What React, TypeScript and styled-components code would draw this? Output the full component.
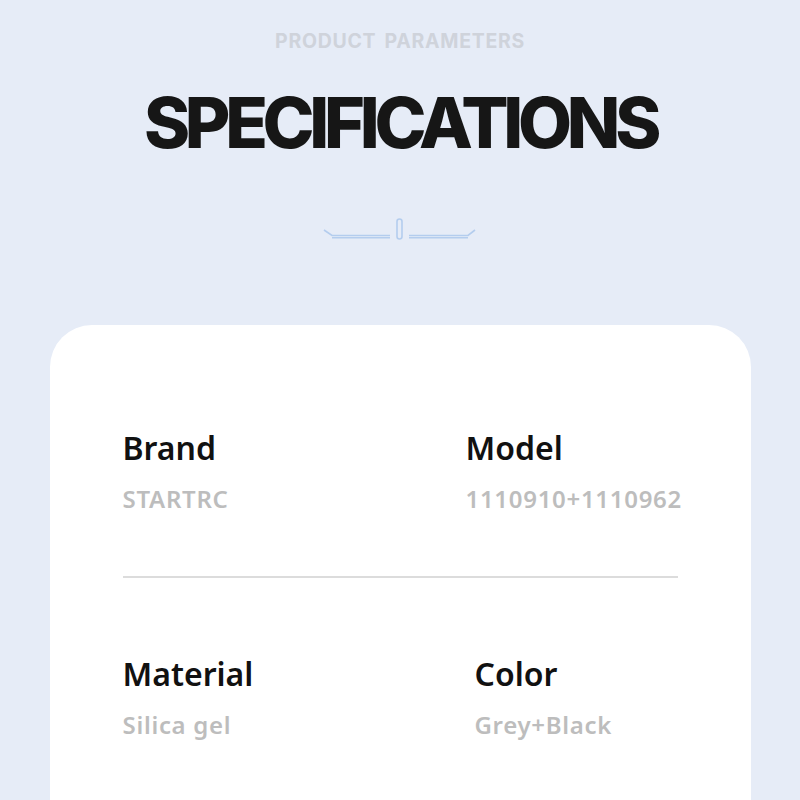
import React from "react";
import styled, { createGlobalStyle } from "styled-components";

const GlobalStyle = createGlobalStyle`
  html, body {
    margin: 0;
    padding: 0;
    background: #e6ecf7;
  }
  body {
    font-family: "Noto Sans", "Liberation Sans", sans-serif;
    overflow: hidden;
  }
`;

const Page = styled.main`
  width: 800px;
  height: 800px;
  overflow: hidden;
  display: flex;
  flex-direction: column;
  align-items: center;
  background: #e6ecf7;
`;

const Header = styled.header`
  display: flex;
  flex-direction: column;
  align-items: center;
  padding-top: 29px;
`;

const Kicker = styled.div`
  font-family: Inter, "Liberation Sans", sans-serif;
  font-weight: 700;
  font-size: 19.5px;
  letter-spacing: 0.7px;
  word-spacing: 3px;
  color: #cfd3db;
  line-height: 24px;
`;

const Title = styled.h1`
  margin: 30px 0 0;
  font-family: Inter, "Liberation Sans", sans-serif;
  font-weight: 800;
  font-size: 70px;
  letter-spacing: -5.3px;
  line-height: 80px;
  color: #161616;
`;

const Ornament = styled.svg`
  display: block;
  margin-top: 54px;
`;

const Card = styled.section`
  margin-top: 82px;
  width: 701px;
  flex: 1;
  box-sizing: border-box;
  background: #ffffff;
  border-radius: 42px 42px 0 0;
  padding: 103px 73px 0;
`;

const Row = styled.div<{ $second: number }>`
  display: grid;
  grid-template-columns: ${({ $second }) => `${$second}px 1fr`};
`;

const Item = styled.div`
  display: flex;
  flex-direction: column;
`;

const Label = styled.div`
  font-weight: 600;
  font-size: 32px;
  line-height: 40px;
  color: #111111;
`;

const Value = styled.div`
  margin-top: 16px;
  font-weight: 600;
  font-size: 24px;
  line-height: 30px;
  color: #bdbdbd;
  letter-spacing: 0.7px;
`;

const Divider = styled.hr`
  margin: 62px 0 76px;
  border: none;
  height: 2px;
  background: #dcdcdc;
  width: 555px;
`;

const specs = [
  {
    second: 343,
    items: [
      { label: "Brand", value: "STARTRC" },
      { label: "Model", value: "1110910+1110962" },
    ],
  },
  {
    second: 352,
    items: [
      { label: "Material", value: "Silica gel" },
      { label: "Color", value: "Grey+Black" },
    ],
  },
];

export default function App() {
  return (
    <Page>
      <GlobalStyle />
      <Header>
        <Kicker>PRODUCT PARAMETERS</Kicker>
        <Title>SPECIFICATIONS</Title>
        <Ornament width="160" height="26" viewBox="0 0 160 26">
          <g fill="none" stroke="#b4cdee" strokeWidth="1.6">
            <path d="M4 13 L12 18.5 L70 18.5" />
            <path d="M12 20.8 L70 20.8" />
            <rect x="77" y="2" width="5" height="20" rx="2.5" />
            <path d="M89 18.5 L148 18.5 L155 13" />
            <path d="M89 20.8 L148 20.8" />
          </g>
        </Ornament>
      </Header>
      <Card>
        {specs.map((row, i) => (
          <React.Fragment key={i}>
            <Row $second={row.second}>
              {row.items.map((it) => (
                <Item key={it.label}>
                  <Label>{it.label}</Label>
                  <Value>{it.value}</Value>
                </Item>
              ))}
            </Row>
            {i === 0 && <Divider />}
          </React.Fragment>
        ))}
      </Card>
    </Page>
  );
}
